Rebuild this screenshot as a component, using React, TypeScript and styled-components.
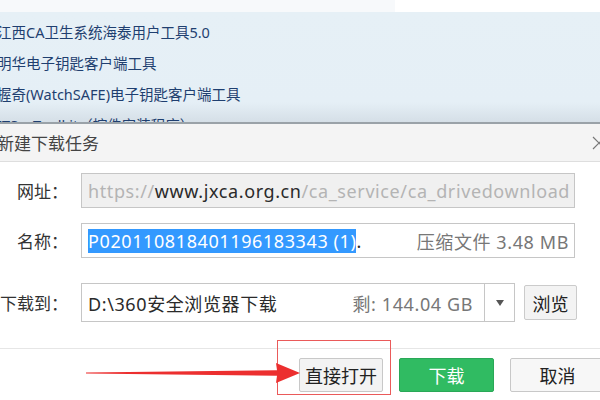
import React from 'react'
import styled, { createGlobalStyle } from 'styled-components'

const GlobalStyle = createGlobalStyle`
  html, body {
    margin: 0;
    padding: 0;
    background: #fff;
  }
  body {
    width: 600px;
    height: 400px;
    overflow: hidden;
    font-family: "Noto Sans", "Noto Sans CJK SC", sans-serif;
  }
`

const listItems = [
  '江西CA卫生系统海泰用户工具5.0',
  '明华电子钥匙客户端工具',
  '握奇(WatchSAFE)电子钥匙客户端工具',
  'ITSecToolkit（控件安装程序）',
]

export default function App() {
  return (
    <>
      <GlobalStyle />
      <Screen>
        <TopStrip />
        <ListPanel>
          {listItems.map((item) => (
            <ListItem key={item}>{item}</ListItem>
          ))}
        </ListPanel>

        <Dialog>
          <TitleBar>
            <Title>新建下载任务</Title>
            <CloseIcon width="14" height="14" viewBox="0 0 14 14">
              <path d="M1 1 L13 13 M13 1 L1 13" stroke="#777" strokeWidth="1.2" fill="none" />
            </CloseIcon>
          </TitleBar>

          <Form>
            <Row $top={11}>
              <Label>网址：</Label>
              <Field $width={494} $height={35} $bg="#f0f0f0" $padRight={6}>
                <Muted>https://</Muted>
                <Strong>www.jxca.org.cn</Strong>
                <Muted>/ca_service/ca_drivedownload</Muted>
              </Field>
            </Row>

            <Row $top={15}>
              <Label>名称：</Label>
              <Field $width={494} $height={35} $bg="#fff" $padRight={5}>
                <Selected>P020110818401196183343 (1)</Selected>
                <Strong>.</Strong>
                <Spacer />
                <Info>压缩文件 3.48 MB</Info>
              </Field>
            </Row>

            <Row $top={25}>
              <Label>下载到：</Label>
              <PathGroup>
                <Field $width={404} $height={39} $bg="#fff" $padRight={11}>
                  <Strong>D:\360安全浏览器下载</Strong>
                  <Spacer />
                  <Info>剩: 144.04 GB</Info>
                </Field>
                <DropButton>
                  <svg width="8" height="6" viewBox="0 0 8 6">
                    <path d="M0 0 H8 L4 6 Z" fill="#555" />
                  </svg>
                </DropButton>
              </PathGroup>
              <BrowseButton>浏览</BrowseButton>
            </Row>
          </Form>

          <Footer>
            <Button $variant="plain">直接打开</Button>
            <Button $variant="primary">下载</Button>
            <Button $variant="cancel">取消</Button>
          </Footer>
        </Dialog>

        <Highlight />
        <Arrow width="214" height="26" viewBox="0 0 214 26">
          <path d="M0 12.4 L191 10.2 L190 3 L214 13 L190 23 L191 15.8 L0 13.6 Z" fill="#ec2f2f" />
        </Arrow>
      </Screen>
    </>
  )
}

const Screen = styled.div`
  position: relative;
  width: 600px;
  height: 400px;
  overflow: hidden;
  display: flex;
  flex-direction: column;
  background: #fff;
`

const TopStrip = styled.div`
  height: 12px;
  flex: none;
  background: linear-gradient(to right, #f7f9fb 0, #f7f9fb 395px, #fff 395px);
`

const ListPanel = styled.ul`
  margin: 0;
  padding: 5px 0 0 0;
  list-style: none;
  height: 105px;
  flex: none;
  overflow: hidden;
  background: linear-gradient(to bottom, #e6f0f6 0%, #e5eff6 82%, #d5dfe7 100%);
  border-bottom: 2px solid #9aa2a8;
`

const ListItem = styled.li`
  height: 31px;
  line-height: 31px;
  font-size: 14.5px;
  color: #1f3f70;
  text-indent: -3px;
  white-space: nowrap;
`

const Dialog = styled.div`
  flex: 1;
  display: flex;
  flex-direction: column;
  background: #fff;
`

const TitleBar = styled.div`
  height: 37px;
  flex: none;
  display: flex;
  align-items: center;
  justify-content: space-between;
  background: #f4f4f4;
  border-bottom: 1px solid #dedede;
`

const Title = styled.span`
  font-size: 17px;
  color: #444;
  text-indent: -3px;
`

const CloseIcon = styled.svg`
  margin-right: -6px;
  margin-top: 1px;
`

const Form = styled.div`
  display: flex;
  flex-direction: column;
`

const Row = styled.div<{ $top: number }>`
  display: flex;
  align-items: center;
  margin-top: ${(p) => p.$top}px;
`

const Label = styled.span`
  width: 68px;
  margin-right: 13px;
  text-align: right;
  font-size: 17px;
  color: #333;
  white-space: nowrap;
`

const Field = styled.div<{ $width: number; $height: number; $bg: string; $padRight: number }>`
  box-sizing: border-box;
  width: ${(p) => p.$width}px;
  height: ${(p) => p.$height}px;
  display: flex;
  align-items: center;
  padding: 0 ${(p) => p.$padRight}px 0 6px;
  background: ${(p) => p.$bg};
  border: 1px solid #c6c6c6;
  font-size: 18px;
  letter-spacing: 0.6px;
  white-space: nowrap;
  overflow: hidden;
`

const Muted = styled.span`
  color: #b4b4b4;
`

const Strong = styled.span`
  color: #2a2a2a;
`

const Selected = styled.span`
  background: #3399ff;
  color: #fff;
`

const Info = styled.span`
  color: #777;
`

const Spacer = styled.span`
  flex: 1;
`

const PathGroup = styled.div`
  display: flex;
`

const DropButton = styled.div`
  box-sizing: border-box;
  width: 31px;
  height: 39px;
  margin-left: -1px;
  display: flex;
  align-items: center;
  justify-content: center;
  background: #fff;
  border: 1px solid #c6c6c6;
`

const BrowseButton = styled.div`
  box-sizing: border-box;
  width: 53px;
  height: 35px;
  margin-left: 9px;
  display: flex;
  align-items: center;
  justify-content: center;
  background: #f3f3f3;
  border: 1px solid #cbcbcb;
  border-radius: 2px;
  font-size: 18px;
  color: #222;
`

const Footer = styled.div`
  margin-top: 26px;
  border-top: 1px solid #e6e6e6;
  padding-top: 9px;
  display: flex;
  justify-content: flex-end;
  gap: 16px;
  margin-right: -5px;
`

const buttonColors = {
  plain: { bg: '#f3f3f3', border: '#c8c8c8', color: '#222', width: 84 },
  primary: { bg: '#30bb62', border: '#2aa857', color: '#fff', width: 95 },
  cancel: { bg: '#f7f7f7', border: '#c8c8c8', color: '#222', width: 95 },
}

const Button = styled.div<{ $variant: keyof typeof buttonColors }>`
  box-sizing: border-box;
  width: ${(p) => buttonColors[p.$variant].width}px;
  height: 34px;
  display: flex;
  align-items: center;
  justify-content: center;
  background: ${(p) => buttonColors[p.$variant].bg};
  border: 1px solid ${(p) => buttonColors[p.$variant].border};
  border-radius: 2px;
  color: ${(p) => buttonColors[p.$variant].color};
  font-size: 18px;
`

const Highlight = styled.div`
  position: absolute;
  left: 277px;
  top: 340px;
  width: 114px;
  height: 55px;
  box-sizing: border-box;
  border: 1.5px solid #ea5a5a;
  pointer-events: none;
`

const Arrow = styled.svg`
  position: absolute;
  left: 86px;
  top: 360px;
`
